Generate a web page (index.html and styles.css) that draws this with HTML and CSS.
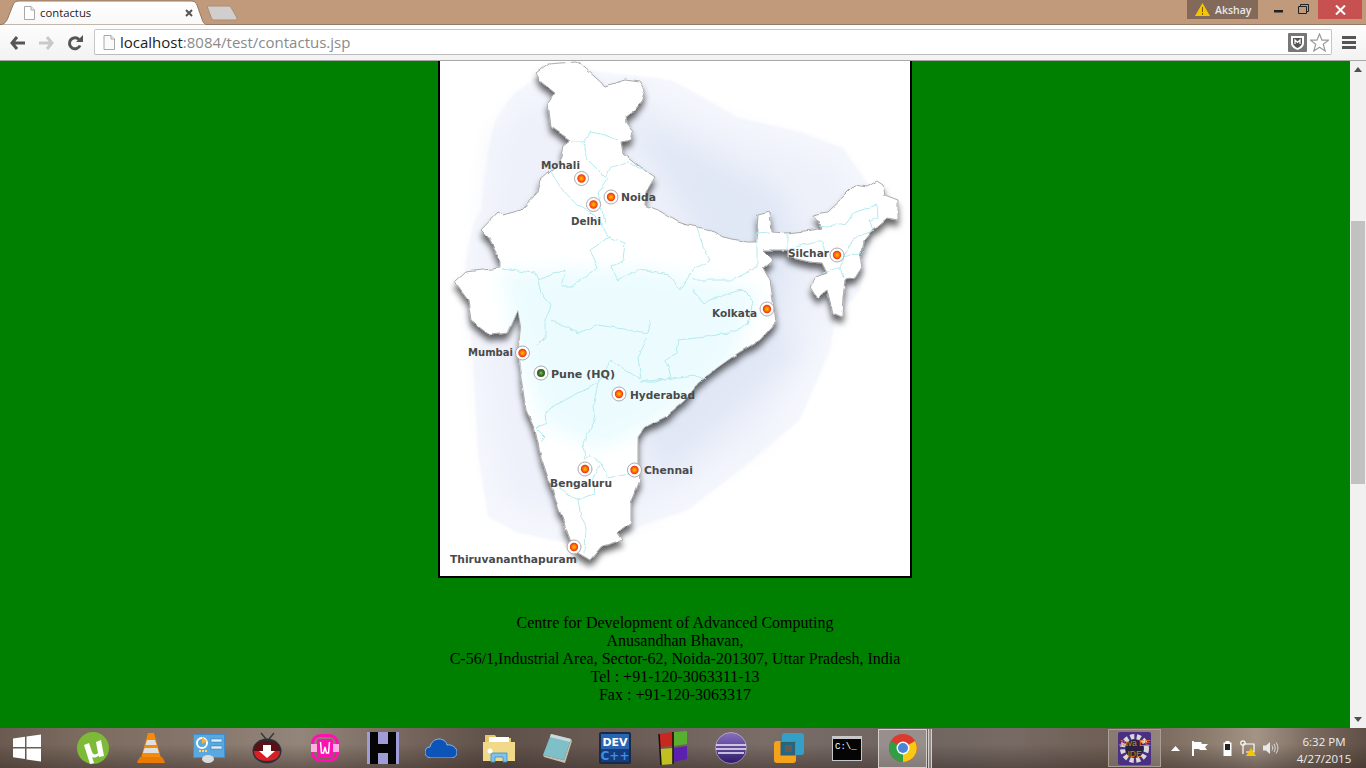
FILE: index.html
```html
<!DOCTYPE html>
<html lang="en">
<head>
<meta charset="utf-8">
<title>contactus</title>
<link rel="stylesheet" href="styles.css">
</head>
<body>
<div class="window">
  <header class="tabstrip">
    <div class="tab">
      <svg class="tab-shape" width="212" height="25" viewBox="0 0 212 25"><path d="M0 25C7 25 9 21 11 15L15 5C16 2 18 1 21 1H193C196 1 198 2 199 5L204 19C205 23 207 25 211 25Z" fill="url(#tabfill)" stroke="#8f7763"/><defs><linearGradient id="tabfill" x1="0" y1="0" x2="0" y2="1"><stop offset="0" stop-color="#fff"/><stop offset="1" stop-color="#f8f8f8"/></linearGradient></defs></svg>
      <svg class="page-icon" width="12" height="14" viewBox="0 0 12 14"><path d="M1.5.5H8L11.5 4V13.5H1.5Z" fill="#fff" stroke="#a8a8a8"/><path d="M8 .5V4H11.5" fill="#eee" stroke="#a8a8a8"/></svg>
      <span class="tab-title">contactus</span>
      <svg class="tab-close" width="8" height="8" viewBox="0 0 8 8"><path d="M1 1L7 7M7 1L1 7" stroke="#555" stroke-width="2"/></svg>
    </div>
    <svg class="newtab" width="32" height="16" viewBox="0 0 32 16"><path d="M1 1H22C24 1 25 2 26 4L31 13C31 15 30 15 28 15H8C6 15 6 14 5 12Z" fill="#d2cecd" stroke="#a98e79"/></svg>
    <div class="strip-spacer"></div>
    <div class="user-badge">
      <svg width="15" height="13" viewBox="0 0 15 13"><path d="M7.5 0L15 13H0Z" fill="#f7c500"/><path d="M7.5 4V9M7.5 10V12" stroke="#7a5c00" stroke-width="1"/></svg>
      <span>Akshay</span>
    </div>
    <div class="win-btn win-min"><svg width="9" height="3" viewBox="0 0 9 3"><rect width="9" height="2.5" fill="#222"/></svg></div>
    <div class="win-btn win-max"><svg width="11" height="10" viewBox="0 0 11 10"><path d="M.5 2.5H8.5V9.5H.5ZM2.5 2.5V.5H10.5V7.5H8.5" fill="none" stroke="#222"/></svg></div>
    <div class="win-close"><svg width="11" height="10" viewBox="0 0 11 10"><path d="M1 .5L10 9.5M10 .5L1 9.5" stroke="#fff" stroke-width="2"/></svg></div>
  </header>

  <nav class="toolbar">
    <svg class="nav-btn" width="16" height="14" viewBox="0 0 16 14"><path d="M7 1L2 7L7 13M2.5 7H15" fill="none" stroke="#555" stroke-width="3"/></svg>
    <svg class="nav-btn fwd" width="16" height="14" viewBox="0 0 16 14"><path d="M9 1L14 7L9 13M13.5 7H1" fill="none" stroke="#c9c9c9" stroke-width="3"/></svg>
    <svg class="nav-btn reload" width="16" height="16" viewBox="0 0 16 16"><path d="M13 10.5A5.5 5.5 0 1 1 12 4.5" fill="none" stroke="#555" stroke-width="3"/><path d="M9 7H16V0Z" fill="#555"/></svg>
    <div class="omnibox">
      <svg width="12" height="15" viewBox="0 0 12 15"><path d="M1 .5H8L11.5 4V14.5H1Z" fill="#fafafa" stroke="#a8a8a8"/><path d="M8 .5V4H11.5" fill="#eee" stroke="#a8a8a8"/></svg>
      <div class="url"><span class="host">localhost</span>:8084/test/contactus.jsp</div>
      <svg class="ext" width="19" height="19" viewBox="0 0 19 19"><rect width="19" height="19" rx="1" fill="#777"/><path d="M3 3H16V10C16 14 12 16 9.500 17C7 16 3 14 3 10Z" fill="#fff"/><path d="M5 5H14V10C14 12.500 11.500 14 9.500 15C7.500 14 5 12.500 5 10Z" fill="#555"/><path d="M7 11V7L9.500 9.500L12 7V11" fill="none" stroke="#fff" stroke-width="1.200"/></svg>
      <svg class="star" width="19" height="19" viewBox="0 0 19 19"><path d="M9.500 1L12 7.200H18.500L13.300 11.300L15.200 18L9.500 14.200L3.800 18L5.700 11.300L.5 7.200H7Z" fill="#fff" stroke="#9a9a9a" stroke-width="1.200"/></svg>
    </div>
    <svg class="menu" width="14" height="13" viewBox="0 0 14 13"><path d="M0 1.500H14M0 6.500H14M0 11.500H14" stroke="#555" stroke-width="3"/></svg>
  </nav>

  <div class="viewport">
    <main class="page">
      <div class="map-frame">
        <svg class="map" width="470" height="515" viewBox="440 61 470 515">
          <defs>
            <filter id="soft" x="-20%" y="-20%" width="140%" height="140%"><feGaussianBlur stdDeviation="14"/></filter>
            <filter id="softer" x="-20%" y="-20%" width="140%" height="140%"><feGaussianBlur stdDeviation="9"/></filter>
            <filter id="edge" x="-5%" y="-5%" width="110%" height="110%"><feGaussianBlur stdDeviation="1"/></filter>
            <filter id="shadow" x="-10%" y="-10%" width="120%" height="120%"><feTurbulence type="fractalNoise" baseFrequency=".08" numOctaves="2" seed="4" result="n"/><feDisplacementMap in="SourceGraphic" in2="n" scale="4" xChannelSelector="R" yChannelSelector="G" result="d"/><feDropShadow in="d" dx="0" dy="6" stdDeviation="3" flood-color="#000" flood-opacity=".6"/></filter>
            <filter id="wiggle" x="-5%" y="-5%" width="110%" height="110%"><feTurbulence type="fractalNoise" baseFrequency=".12" numOctaves="2" seed="7" result="n"/><feDisplacementMap in="SourceGraphic" in2="n" scale="4" xChannelSelector="R" yChannelSelector="G"/></filter>
            <clipPath id="indiaclip"><path d="M536 73L548 64L560 63L576 62L585 68L596 78L605 86L625 80L640 82L645 90L641 102L635 110L625 117L626 123L633 132L631 140L621 142L623 153L638 165L655 177L646 192L645 205L658 210L678 222L687 225L710 230L723 237L747 242L756 242L758 215L770 212L772 232L787 233L813 230L822 228L813 215L827 212L843 197L855 185L867 187L877 181L883 185L885 195L898 200L898 220L887 218L873 230L863 243L860 257L862 267L855 278L845 280L843 297L842 317L833 313L827 290L817 298L810 287L817 277L827 273L822 263L810 262L788 257L788 250L763 250L773 260L763 268L770 280L773 300L776 322L760 340L738 353L718 367L698 383L685 400L665 417L645 427L638 437L638 463L640 480L631 503L631 523L618 533L623 540L601 547L590 560L578 553L571 542L558 507L541 457L535 430L526 410L520 370L518 353L521 327L518 310L508 333L491 335L471 320L468 300L458 287L455 282L466 272L500 268L500 260L488 237L481 230L498 212L503 215L521 210L538 192L541 180L560 163L563 145L570 140L551 127L548 103L555 93L541 82Z"/></clipPath>
            <radialGradient id="pinred"><stop offset="0" stop-color="#ffc000"/><stop offset=".4" stop-color="#ff8a00"/><stop offset="1" stop-color="#ee2a10"/></radialGradient>
            <radialGradient id="pingreen"><stop offset="0" stop-color="#9fbf80"/><stop offset=".5" stop-color="#3f7a2a"/><stop offset="1" stop-color="#2c5a20"/></radialGradient>
          </defs>

          <path class="blob-outer" filter="url(#edge)" d="M465 270C468 240 475 215 481 210C485 170 490 135 495 123C502 108 510 98 515 93L536 78L585 70L671 80L690 90L737 117L803 133L843 148L863 177L880 200L860 290L835 320L830 350L800 420L740 470L688 510L638 527L605 552L568 543L518 533L488 517L478 453L473 363Z"/>
          <path class="blob-mid" filter="url(#soft)" d="M480 300L495 140L530 100L640 95L730 130L840 165L860 230L815 340L760 440L650 510L600 530L560 520L505 500L490 420Z"/>
          <path class="blob-deep" filter="url(#soft)" d="M620 110L700 150L780 190L800 240L780 330L800 350L720 430L660 480L640 430L700 240Z"/>

          <path class="india" filter="url(#shadow)" d="M536 73L548 64L560 63L576 62L585 68L596 78L605 86L625 80L640 82L645 90L641 102L635 110L625 117L626 123L633 132L631 140L621 142L623 153L638 165L655 177L646 192L645 205L658 210L678 222L687 225L710 230L723 237L747 242L756 242L758 215L770 212L772 232L787 233L813 230L822 228L813 215L827 212L843 197L855 185L867 187L877 181L883 185L885 195L898 200L898 220L887 218L873 230L863 243L860 257L862 267L855 278L845 280L843 297L842 317L833 313L827 290L817 298L810 287L817 277L827 273L822 263L810 262L788 257L788 250L763 250L773 260L763 268L770 280L773 300L776 322L760 340L738 353L718 367L698 383L685 400L665 417L645 427L638 437L638 463L640 480L631 503L631 523L618 533L623 540L601 547L590 560L578 553L571 542L558 507L541 457L535 430L526 410L520 370L518 353L521 327L518 310L508 333L491 335L471 320L468 300L458 287L455 282L466 272L500 268L500 260L488 237L481 230L498 212L503 215L521 210L538 192L541 180L560 163L563 145L570 140L551 127L548 103L555 93L541 82Z"/>
          <g clip-path="url(#indiaclip)">
            <path class="india-cyan" filter="url(#softer)" d="M500 272L640 268L760 290L730 365L660 420L600 450L545 425L520 360Z"/>
          </g>
          <g class="states" filter="url(#wiggle)">
            <path d="M571 142L583 142L591 132L605 135L618 140"/>
            <path d="M583 143L588 160L605 177L611 167L628 163L645 170"/>
            <path d="M551 172L561 188L575 203L588 210L601 223L608 237L625 243L623 260L611 267L618 280L638 270L651 272L670 275L680 290L693 270L710 260L703 247L697 227"/>
            <path d="M608 177L598 193L605 223"/>
            <path d="M610 237L590 250L598 267L571 287L561 287L565 270L538 280L535 273L501 269"/>
            <path d="M538 280L541 293L551 307L545 320L545 337L535 347"/>
            <path d="M693 280L733 280L757 267L757 233L770 232"/>
            <path d="M693 290L703 303L730 293L743 290L753 300L748 325L728 333L705 337L678 340L676 353L666 360L671 377L655 382L641 382"/>
            <path d="M787 233L787 250L813 242L822 242L825 252"/>
            <path d="M820 227L847 223L853 213L877 205L878 217L870 220L873 230L853 240L843 257L863 252"/>
            <path d="M843 257L840 267L823 273M840 267L843 277"/>
            <path d="M551 320L578 333L598 325L648 333L651 320M648 337L638 357L641 380L611 360L598 383L565 400L551 408L545 413L546 423L536 428L545 437L541 442"/>
            <path d="M598 383L593 407L595 420L583 443L585 460L591 455L601 463L608 478L635 473"/>
            <path d="M641 382L695 375L705 380"/>
            <path d="M558 487L578 500L595 493L593 480L601 463M578 500L581 517L586 527L585 553"/>
          </g>

          <g class="pin"><circle cx="581.500" cy="178.500" r="7"/><circle class="dot" cx="581.500" cy="178.500" r="4.200"/></g>
          <g class="pin"><circle cx="611" cy="197" r="7"/><circle class="dot" cx="611" cy="197" r="4.200"/></g>
          <g class="pin"><circle cx="593.500" cy="204.500" r="7"/><circle class="dot" cx="593.500" cy="204.500" r="4.200"/></g>
          <g class="pin"><circle cx="837" cy="255" r="7"/><circle class="dot" cx="837" cy="255" r="4.200"/></g>
          <g class="pin"><circle cx="767" cy="309" r="7"/><circle class="dot" cx="767" cy="309" r="4.200"/></g>
          <g class="pin"><circle cx="522.500" cy="353" r="7"/><circle class="dot" cx="522.500" cy="353" r="4.200"/></g>
          <g class="pin"><circle cx="541" cy="373" r="7"/><circle class="dot-hq" cx="541" cy="373" r="4"/></g>
          <g class="pin"><circle cx="619" cy="394" r="7"/><circle class="dot" cx="619" cy="394" r="4.200"/></g>
          <g class="pin"><circle cx="585" cy="469" r="7"/><circle class="dot" cx="585" cy="469" r="4.200"/></g>
          <g class="pin"><circle cx="634.500" cy="470" r="7"/><circle class="dot" cx="634.500" cy="470" r="4.200"/></g>
          <g class="pin"><circle cx="574" cy="547" r="7"/><circle class="dot" cx="574" cy="547" r="4.200"/></g>

          <g class="labels">
            <text x="541" y="169" textLength="39" lengthAdjust="spacingAndGlyphs">Mohali</text>
            <text x="621" y="201" textLength="35" lengthAdjust="spacingAndGlyphs">Noida</text>
            <text x="571" y="225" textLength="30" lengthAdjust="spacingAndGlyphs">Delhi</text>
            <text x="788" y="257" textLength="41" lengthAdjust="spacingAndGlyphs">Silchar</text>
            <text x="712" y="317" textLength="45" lengthAdjust="spacingAndGlyphs">Kolkata</text>
            <text x="468" y="356" textLength="45" lengthAdjust="spacingAndGlyphs">Mumbai</text>
            <text x="551" y="378" textLength="64" lengthAdjust="spacingAndGlyphs">Pune (HQ)</text>
            <text x="630" y="399" textLength="65" lengthAdjust="spacingAndGlyphs">Hyderabad</text>
            <text x="644" y="474" textLength="49" lengthAdjust="spacingAndGlyphs">Chennai</text>
            <text x="550" y="487" textLength="62" lengthAdjust="spacingAndGlyphs">Bengaluru</text>
            <text x="450" y="563" textLength="127" lengthAdjust="spacingAndGlyphs">Thiruvananthapuram</text>
          </g>
        </svg>
      </div>
      <address class="contact">
        <div>Centre for Development of Advanced Computing</div>
        <div>Anusandhan Bhavan,</div>
        <div>C-56/1,Industrial Area, Sector-62, Noida-201307, Uttar Pradesh, India</div>
        <div>Tel : +91-120-3063311-13</div>
        <div>Fax : +91-120-3063317</div>
      </address>
    </main>
    <aside class="scrollbar">
      <div class="arrow-up"></div>
      <div class="track"><div class="thumb"></div></div>
      <div class="arrow-down"></div>
    </aside>
  </div>

  <footer class="taskbar">
    <svg class="start" width="28" height="28" viewBox="0 0 28 28"><path d="M0 4.500L12 2.800V13H0ZM13.500 2.600L28 .5V13H13.500ZM0 14.500H12V25L0 23.300ZM13.500 14.500H28V27.500L13.500 25.400Z" fill="#fff"/></svg>
    <div class="apps">
      <div class="app"><svg width="32" height="32" viewBox="0 0 32 32"><circle cx="16" cy="16" r="16" fill="#7dba38"/><path d="M7 13L12 11L15 20C16 23 19 23 21 21L19 10L24 8L27 24L22 25L21.500 23.500C19 26 16 26 15 25L17 31L13 32Z" fill="#fff"/></svg></div>
      <div class="app"><svg width="28" height="32" viewBox="0 0 28 32"><path d="M11 1H17L24 26H4Z" fill="#f58a0b"/><path d="M10 8H18L19.500 13H8.500ZM7.500 16H20.500L22 21H6Z" fill="#dfdfdf"/><path d="M3 25L0 30C0 31 2 31 3 31H25C27 31 28 31 28 30L25 25Z" fill="#e87a06"/></svg></div>
      <div class="app"><svg width="32" height="30" viewBox="0 0 32 30"><rect y="1" width="32" height="24" fill="#3f8fd0"/><rect x="1" y="2" width="30" height="22" fill="#5aa8e0"/><circle cx="9" cy="10" r="5" fill="none" stroke="#fff" stroke-width="2"/><path d="M9 4L14 8L9 11Z" fill="#f4b43a"/><path d="M18 6H29V9H18ZM18 13H29V16H18Z" fill="#dff0fb" stroke="#2a6ea8" stroke-width=".5"/><path d="M6 18H14" stroke="#ffd36b" stroke-width="2" stroke-dasharray="2 1"/><ellipse cx="15" cy="26" rx="6" ry="4" fill="#dcdcdc"/></svg></div>
      <div class="app"><svg width="30" height="32" viewBox="0 0 30 32"><path d="M9 1L14 7M22 1L17 7" stroke="#3a3a3a" stroke-width="1.500"/><ellipse cx="15" cy="19" rx="14.500" ry="12.500" fill="#25303a"/><path d="M2 19C2 11 8 9 15 9C22 9 28 11 28 19Z" fill="#5a1015"/><path d="M2 19C2 26 8 29 15 29C22 29 28 26 28 19Z" fill="#d81f26"/><path d="M11 13H19V19H23L15 26L7 19H11Z" fill="#fff"/></svg></div>
      <div class="app"><svg width="28" height="28" viewBox="0 0 28 28"><rect x="1.500" y="1.500" width="25" height="25" rx="8" fill="none" stroke="#ff10b0" stroke-width="3"/><rect x="0" y="10" width="28" height="8" fill="#ffb0e4"/><rect x="6" y="5" width="16" height="18" rx="2" fill="#ff10b0"/><path d="M9.500 8L10.500 19H12.500L14 13L15.500 19H17.500L18.500 8" fill="none" stroke="#fff" stroke-width="1.500"/></svg></div>
      <div class="app"><svg width="32" height="32" viewBox="0 0 32 32"><rect width="32" height="32" fill="#a09cd8"/><path d="M3 0H11V12H21V0H29V32H21V21H11V32H3Z" fill="#050505"/></svg></div>
      <div class="app"><svg width="32" height="20" viewBox="0 0 32 20"><path d="M7 20C2 20 0 17 0 14C0 11 2 9 5 9C6 4 10 1 14 1C18 1 21 3 22 7C27 6 32 10 32 14C32 18 29 20 26 20Z" fill="#0c54b8" stroke="#8fb8e8" stroke-width="1"/></svg></div>
      <div class="app"><svg width="32" height="30" viewBox="0 0 32 30"><path d="M2 2H12L14 5H28V12H2Z" fill="#e9c468"/><rect x="6" y="4" width="20" height="7" fill="#fff"/><path d="M0 9H32V28H0Z" fill="#f2d98a"/><path d="M8 29V20H24V29H20V24H12V29Z" fill="#7cc4ee" stroke="#3a8ec8" stroke-width=".8"/><circle cx="7" cy="18" r="2.500" fill="#fff"/></svg></div>
      <div class="app"><svg width="30" height="30" viewBox="0 0 30 30"><path d="M9 1L29 6L22 27L1 22Z" fill="#7fc0c8"/><path d="M9 1L29 6L28 9L8 4Z" fill="#cfd8d8"/><path d="M1 22L22 27L29 6L30 8L23 30L2 24Z" fill="#c0c0b0"/></svg></div>
      <div class="app"><svg width="32" height="32" viewBox="0 0 32 32"><rect width="32" height="32" rx="2" fill="#172a48"/><rect x="2" y="2" width="28" height="15" fill="#2a66b0"/><rect x="2" y="17" width="28" height="13" fill="#143a80"/><text x="16" y="14" class="dev-t">DEV</text><text x="16" y="28" class="dev-c">C++</text></svg></div>
      <div class="app"><svg width="30" height="34" viewBox="0 0 30 34"><path d="M1 3L15 1V15L2 16Z" fill="#c8281e"/><path d="M16 1L29 0V13L16 15Z" fill="#58b030"/><path d="M2 18L15 17V33L3 34Z" fill="#c0c020"/><path d="M16 17L29 15V28L16 31Z" fill="#5c20b0"/><path d="M1 3L3 34M15 1V33" stroke="#111" stroke-width="1.500"/></svg></div>
      <div class="app"><svg width="32" height="32" viewBox="0 0 32 32"><defs><linearGradient id="ecl" x1="0" y1="0" x2="0" y2="1"><stop offset="0" stop-color="#8a6fc0"/><stop offset="1" stop-color="#2c1a68"/></linearGradient></defs><circle cx="16" cy="16" r="15.500" fill="url(#ecl)" stroke="#ddd" stroke-width=".5"/><path d="M1 13H31M1 17H31M3 21H29" stroke="#efeaf8" stroke-width="1.500"/></svg></div>
      <div class="app"><svg width="30" height="32" viewBox="0 0 30 32"><rect x="8" y="1" width="22" height="22" rx="3" fill="#34a0c8"/><rect x="0" y="9" width="22" height="22" rx="3" fill="#f5a31c"/><rect x="7" y="10" width="14" height="13" fill="#1a6a88" stroke="#555"/><rect x="11" y="13" width="7" height="7" fill="#6b5a50"/></svg></div>
      <div class="app"><svg width="30" height="25" viewBox="0 0 30 25"><rect width="30" height="25" fill="#c8c8c8"/><rect x="1" y="3" width="28" height="21" fill="#050505"/><text x="3" y="13" class="cmd-t">C:\_</text></svg></div>
      <div class="app app-active"><svg width="28" height="28" viewBox="0 0 28 28"><circle cx="14" cy="14" r="14" fill="#db3a2e"/><path d="M14 14L26 7A14 14 0 0 1 14 28Z" fill="#f6c913"/><path d="M14 14L14 28A14 14 0 0 1 2 7Z" fill="#2f9e44"/><circle cx="14" cy="14" r="6.500" fill="#fff"/><circle cx="14" cy="14" r="5" fill="#4a86d8"/></svg></div>
      <div class="active-sliver"></div>
    </div>
    <div class="tray-spacer"></div>
    <div class="pinned-eclipse">
      <svg width="33" height="33" viewBox="0 0 33 33"><rect width="33" height="33" rx="2" fill="#4b2f84"/><circle cx="16.500" cy="16.500" r="12" fill="none" stroke="#d8d8d8" stroke-width="5" stroke-dasharray="4 2.500"/><circle cx="16.500" cy="16.500" r="9" fill="#2a2240"/><text x="16.500" y="14" class="ide-t">Java EE</text><text x="16.500" y="25" class="ide-t">IDE</text></svg>
    </div>
    <div class="tray">
      <svg width="9" height="5" viewBox="0 0 9 5"><path d="M4.500 0L9 5H0Z" fill="#fff"/></svg>
      <svg class="tray-flag" width="16" height="15" viewBox="0 0 16 15"><path d="M1 0V15" stroke="#fff" stroke-width="2"/><path d="M2 1H9L10 3H16L13 6L15 9H8L7 8H2Z" fill="#fff"/></svg>
      <svg class="tray-batt" width="9" height="15" viewBox="0 0 9 15"><path d="M2.500 0H6.500V1.500H8.500V15H.5V1.500H2.500Z" fill="#fff"/><rect x="2" y="3" width="5" height="6" fill="#222"/></svg>
      <svg class="tray-net" width="16" height="16" viewBox="0 0 16 16"><circle cx="3" cy="3" r="2.200" fill="none" stroke="#fff" stroke-width="1.200"/><path d="M3 5V14M3 4H14V12H6" fill="none" stroke="#fff" stroke-width="1.200"/><path d="M11 8L16 16H6Z" fill="#f7c500"/></svg>
      <svg class="tray-vol" width="16" height="14" viewBox="0 0 16 14"><path d="M0 4.500H3L7 1V13L3 9.500H0Z" fill="#e8e8e8"/><path d="M9 4.500C10 6 10 8 9 9.500M11 3C12.500 5 12.500 9 11 11M13 1.500C15.500 5 15.500 9 13 12.500" fill="none" stroke="#ddd"/></svg>
    </div>
    <div class="clock"><div>6:32 PM</div><div>4/27/2015</div></div>
  </footer>
</div>
</body>
</html>
```
FILE: styles.css
```css
* { box-sizing: border-box; }
html, body { margin: 0; height: 100%; overflow: hidden; }
svg { display: block; flex: none; }

.window { display: flex; flex-direction: column; width: 1366px; height: 768px; }

/* tab strip */
.tabstrip {
  height: 25px; flex: none; display: flex; align-items: flex-start;
  background: #c19a7c; border-bottom: 1px solid #927a66;
  font-family: "Open Sans", sans-serif;
}
.tab { position: relative; width: 212px; height: 25px; flex: none; display: flex; align-items: center; padding-left: 23px; }
.tab-shape { position: absolute; left: -2px; top: 0; }
.page-icon { position: relative; margin-right: 5px; }
.tab-title { position: relative; font-size: 11.300px; color: #222; width: 145px; }
.tab-close { position: relative; }
.newtab { margin: 5px 0 0 -6px; }
.strip-spacer { flex: 1; }
.user-badge {
  width: 71px; height: 19px; background: #82695a; display: flex; align-items: center;
  gap: 5px; padding-left: 8px; font-size: 10.500px; font-weight: 600; color: #e8e8e8;
}
.win-btn { width: 30px; height: 19px; display: flex; align-items: center; justify-content: center; }
.win-min { margin-left: 5px; padding-top: 3px; }
.win-max { padding-bottom: 2px; width: 20px; }
.win-close { width: 44px; height: 19px; margin: 0 4px 0 5px; background: #c75050; display: flex; align-items: center; justify-content: center; }

/* toolbar */
.toolbar {
  height: 36px; flex: none; display: flex; align-items: center; padding-left: 10px;
  background: linear-gradient(#fdfdfd, #f2f2f2); border-bottom: 1px solid #a8a8a8;
}
.nav-btn.fwd { margin-left: 12px; }
.nav-btn.reload { margin: 0 11px 0 13px; }
.omnibox {
  width: 1238px; height: 26px; margin-top: -1px; display: flex; align-items: center; padding-left: 8px;
  background: #fff; border: 1px solid #c6c6c6; border-bottom-color: #bbb; border-radius: 2px;
  font-family: "Open Sans", sans-serif;
}
.url { flex: 1; margin-left: 5px; font-size: 15px; color: #8a8a8a; white-space: nowrap; }
.host { color: #222; }
.ext { margin-right: 3px; }
.star { margin-right: 2px; }
.menu { margin-left: 10px; }

/* page */
.viewport { flex: 1; min-height: 0; display: flex; }
.page { flex: 1; background: #008000; display: flex; flex-direction: column; align-items: center; }
.map-frame { width: 474px; height: 517px; flex: none; border: 2px solid #000; border-top: 0; background: #fff; }
.map { width: 470px; height: 515px; }
.contact {
  margin-top: 36px; text-align: center; font-style: normal; color: #000;
  font-family: "Liberation Serif", serif; font-size: 16px; line-height: 18px;
}

/* map */
.blob-outer { fill: #f5f7fd; }
.blob-mid { fill: #eef1fa; }
.blob-deep { fill: #e0e7f5; }
.india { fill: #fff; stroke: #a9a9a9; stroke-width: 1; stroke-linejoin: round; }
.india-cyan { fill: #ecfcfe; }
.states path { fill: none; stroke: #b6eaee; stroke-width: 1; }
.pin circle { fill: #fff; stroke: #aaa; stroke-width: 1; }
.pin .dot { fill: url(#pinred); stroke: none; }
.pin .dot-hq { fill: url(#pingreen); stroke: none; }
.labels text { font-family: "DejaVu Sans", sans-serif; font-size: 11px; font-weight: 700; fill: #4a4a4a; }

/* scrollbar */
.scrollbar { width: 16px; flex: none; background: #f1f1f1; display: flex; flex-direction: column; align-items: center; }
.arrow-up { width: 0; height: 0; margin: 6px 0 5px; border: 4px solid transparent; border-top: 0; border-bottom: 5px solid #505050; }
.arrow-down { width: 0; height: 0; margin: 5px 0 6px; border: 4px solid transparent; border-bottom: 0; border-top: 5px solid #505050; }
.track { flex: 1; width: 100%; padding-top: 144px; }
.thumb { height: 263px; margin: 0 1px; background: #c1c1c1; }

/* taskbar */
.taskbar {
  height: 40px; flex: none; display: flex; align-items: center; color: #eee;
  background:
    linear-gradient(rgba(50,38,34,0) 40%, rgba(50,38,34,.45)),
    linear-gradient(90deg, #6a5a50 0, #7c6c60 6%, #85756a 14%, #94857a 22%, #75655c 30%, #5f5049 36%, #6b5c56 46%, #7a6d68 56%, #6f6460 66%, #776a64 74%, #6e5d52 82%, #8a7a6c 88%, #a39486 92%, #7a6a5e 96%, #5f4f46 100%);
}
.start { margin-left: 13px; }
.apps { display: flex; align-items: center; gap: 8px; margin-left: 27px; }
.app { width: 50px; height: 40px; display: flex; align-items: center; justify-content: center; }
.app-active { width: 49px; height: 39px; margin-left: -2px; margin-right: -7px; background: rgba(255,255,255,.28); border: 1px solid #d4cfca; }
.active-sliver { width: 4px; height: 39px; background: rgba(255,255,255,.28); border-right: 1px solid #d4cfca; border-left: 1px solid #d4cfca; }
.tray-spacer { flex: 1; }
.pinned-eclipse {
  width: 53px; height: 38px; display: flex; align-items: center; justify-content: center;
  background: rgba(255,255,255,.18); border: 1px solid #a89e94;
}
.tray { display: flex; align-items: center; margin-left: 10px; width: 111px; }
.tray-flag { margin-left: 12px; }
.tray-batt { margin-left: 15px; }
.tray-net { margin-left: 8px; }
.tray-vol { margin-left: 7px; }
.clock { width: 84px; padding-top: 4px; text-align: center; font-family: "Open Sans", sans-serif; font-size: 11.500px; line-height: 17px; }
.dev-t, .dev-c { font-family: "DejaVu Sans", sans-serif; font-weight: 700; font-size: 11px; text-anchor: middle; }
.dev-t { fill: #fff; }
.dev-c { fill: #3f8fe0; font-size: 12px; }
.cmd-t { font-family: "Liberation Mono", monospace; font-size: 9px; fill: #fff; }
.ide-t { font-family: "Liberation Sans", sans-serif; font-size: 8.500px; text-anchor: middle; fill: #f07a10; }
```
